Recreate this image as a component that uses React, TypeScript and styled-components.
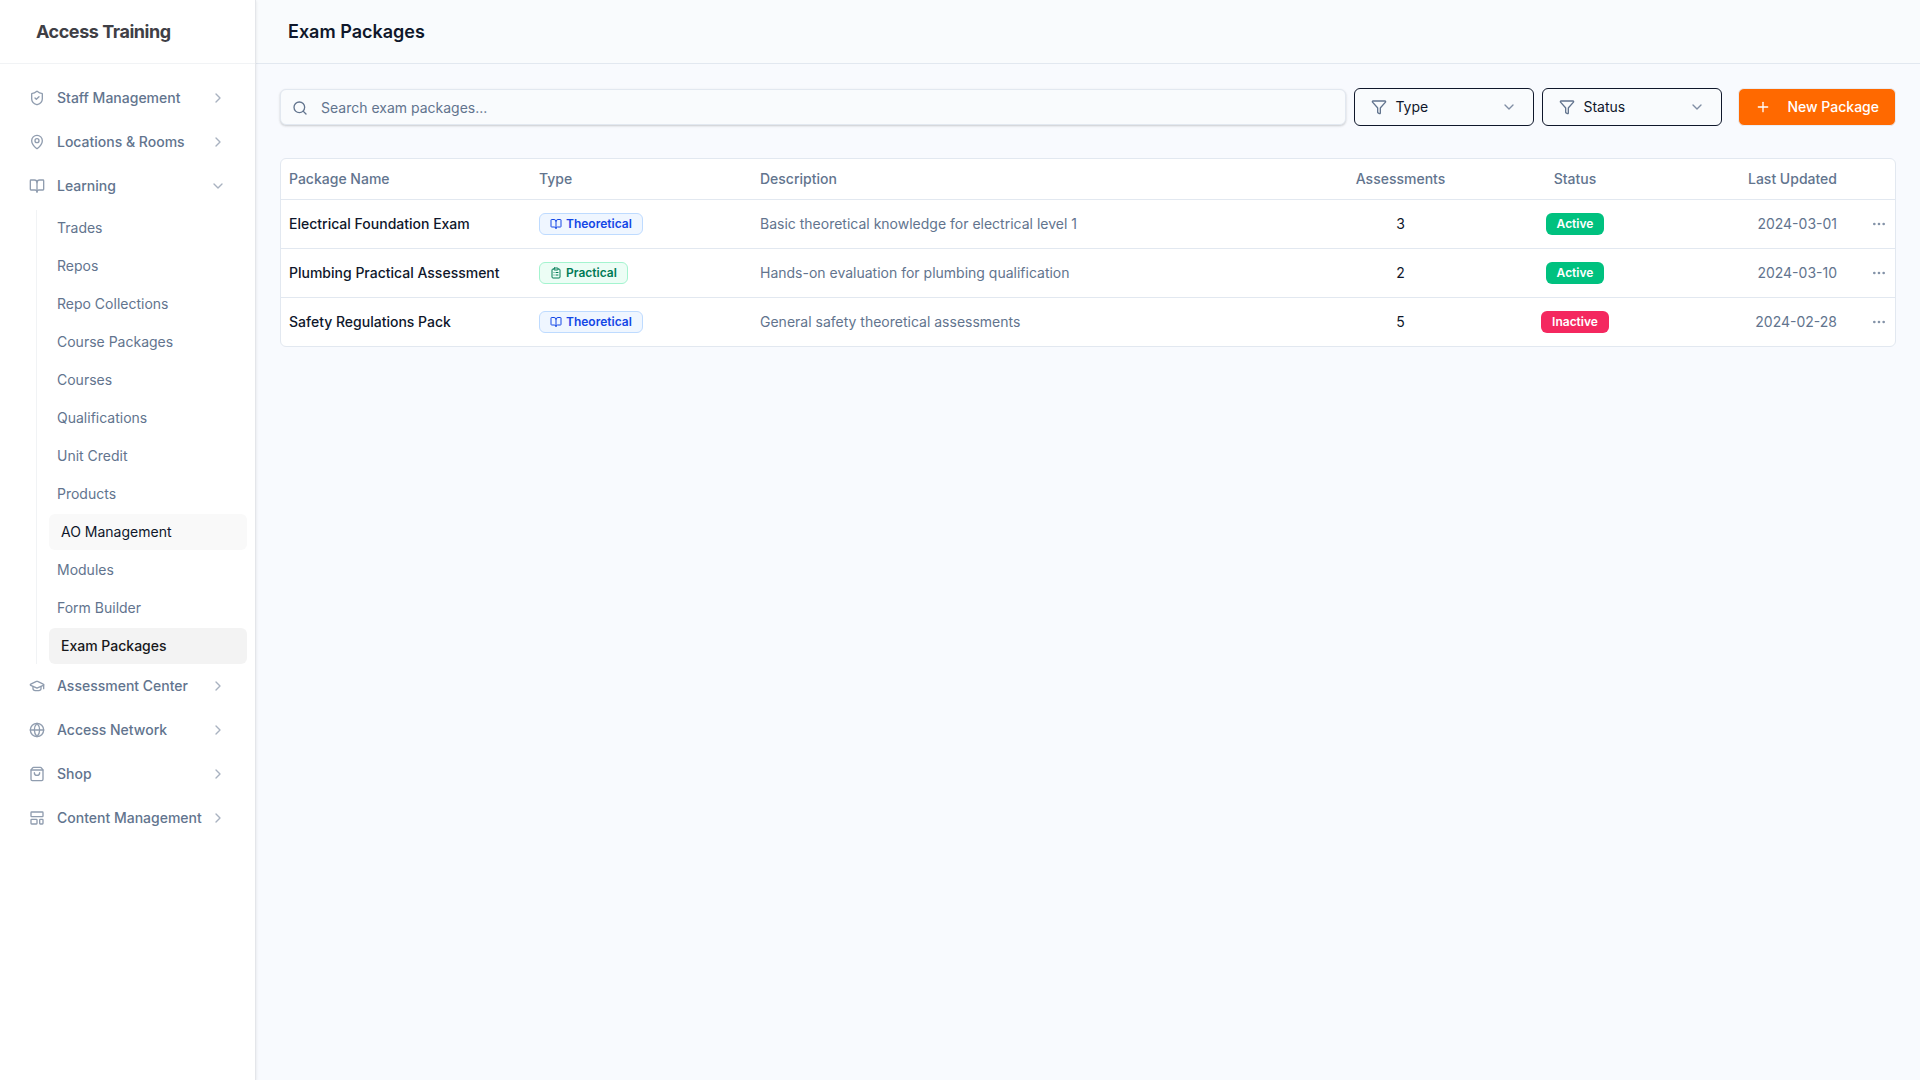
import React from "react";
import styled, { createGlobalStyle, css } from "styled-components";
import {
  BookOpen,
  ChevronDown,
  ChevronRight,
  ClipboardList,
  Ellipsis,
  Funnel,
  Globe,
  GraduationCap,
  LayoutTemplate,
  MapPin,
  Plus,
  Search,
  ShieldCheck,
  ShoppingBag,
} from "lucide-react";

const GlobalStyle = createGlobalStyle`
  *, *::before, *::after { box-sizing: border-box; }
  body {
    margin: 0;
    background: #f8fafe;
    color: #0f172b;
    font-family: Inter, "Liberation Sans", sans-serif;
    font-size: 14px;
    line-height: 20px;
  }
  button, input, select { font: inherit; color: inherit; }
`;

const Shell = styled.div`
  display: flex;
  min-height: 100vh;
`;

const Sidebar = styled.aside`
  position: relative;
  z-index: 1;
  flex: none;
  width: 256px;
  background: #fff;
  border-right: 1px solid #e4e6ea;
  box-shadow: 0 1px 3px rgba(0, 0, 0, 0.1);
`;

const Brand = styled.div`
  display: flex;
  align-items: center;
  height: 64px;
  padding: 0 36px;
  border-bottom: 1px solid #f1f3f5;
  color: #3f3f46;
  font-size: 18px;
  font-weight: 700;
  letter-spacing: -0.025em;
`;

const Nav = styled.nav`
  display: flex;
  flex-direction: column;
  gap: 4px;
  padding: 14px 8px;
`;

const NavGroup = styled.div`
  display: flex;
  flex-direction: column;
`;

const NavButton = styled.button`
  display: flex;
  align-items: center;
  gap: 12px;
  height: 40px;
  padding: 0 21px;
  border: 0;
  background: none;
  color: #62748e;
  font-weight: 500;
  text-align: left;
  white-space: nowrap;
  cursor: pointer;

  svg {
    flex: none;
    opacity: 0.7;
  }
  svg:last-child {
    opacity: 0.55;
  }
  span {
    flex: 1;
    min-width: 0;
  }
`;

const SubMenu = styled.div`
  display: flex;
  flex-direction: column;
  gap: 2px;
  margin: 4px 0 -2px 28px;
  padding-left: 12px;
  border-left: 1px solid #f1f3f5;
`;

const SubLink = styled.a<{ $tone?: "hover" | "active" }>`
  display: flex;
  align-items: center;
  height: 36px;
  padding: 0 8px;
  border-radius: 6px;
  color: #62748e;
  text-decoration: none;
  ${({ $tone }) =>
    $tone === "hover" &&
    css`
      padding: 0 12px;
      background: #f9f9f9;
      color: #0f172b;
    `}
  ${({ $tone }) =>
    $tone === "active" &&
    css`
      padding: 0 12px;
      background: #f3f3f3;
      color: #18181b;
      font-weight: 500;
    `}
`;

const Main = styled.main`
  flex: 1;
  min-width: 0;
`;

const Header = styled.header`
  display: flex;
  align-items: center;
  height: 64px;
  padding: 0 32px;
  border-bottom: 1px solid #e2e8f0;
  background: #f9fbfd;
`;

const Title = styled.h1`
  margin: 0;
  font-size: 18px;
  font-weight: 600;
`;

const Content = styled.div`
  display: flex;
  flex-direction: column;
  gap: 32px;
  padding: 24px;
`;

const Toolbar = styled.div`
  display: flex;
  align-items: center;
  gap: 8px;
`;

const SearchBox = styled.label`
  display: flex;
  flex: 1;
  align-items: center;
  gap: 13px;
  height: 36px;
  padding: 2px 11px 0;
  border: 1px solid #e2e8f0;
  border-radius: 6px;
  background: #f9fbfd;
  box-shadow: 0 1px 3px rgba(0, 0, 0, 0.1), 0 1px 2px rgba(0, 0, 0, 0.1);
  color: #62748e;

  svg {
    flex: none;
  }
  input {
    flex: 1;
    min-width: 0;
    padding: 0;
    border: 0;
    outline: 0;
    background: none;
  }
  input::placeholder {
    color: #62748e;
    opacity: 1;
  }
`;

const Filter = styled.label`
  display: flex;
  flex: none;
  align-items: center;
  gap: 8px;
  width: 180px;
  height: 38px;
  padding: 0 16px;
  border: 1px solid #0f172b;
  border-radius: 6px;
  background: #f9fbfd;

  svg {
    flex: none;
    color: #62748e;
  }
  svg:last-child {
    opacity: 0.8;
  }
  select {
    flex: 1;
    min-width: 0;
    padding: 0;
    border: 0;
    outline: 0;
    background: none;
    appearance: none;
  }
`;

const NewButton = styled.button`
  display: flex;
  flex: none;
  align-items: center;
  gap: 16px;
  height: 38px;
  margin-left: 8px;
  padding: 0 16px;
  border: 1px solid #e9edf3;
  border-radius: 6px;
  background: #ff6900;
  color: #fff;
  font-weight: 500;
  cursor: pointer;
`;

const TableCard = styled.div`
  overflow: hidden;
  border: 1px solid #e2e8f0;
  border-radius: 6px;
  background: #fff;
`;

const Table = styled.table`
  width: 100%;
  border-collapse: separate;
  border-spacing: 0;
  table-layout: fixed;

  tbody tr:last-child td {
    height: 48px;
    border-bottom: 0;
  }
`;

type Align = "left" | "center" | "right";

const Th = styled.th<{ $width?: number; $align?: Align }>`
  width: ${({ $width }) => ($width ? `${$width}px` : "auto")};
  height: 41px;
  padding: 0 8px;
  border-bottom: 1px solid #e2e8f0;
  color: #62748e;
  font-weight: 500;
  text-align: ${({ $align = "left" }) => $align};
`;

const Td = styled.td<{ $align?: Align; $muted?: boolean; $strong?: boolean }>`
  height: 49px;
  padding: 0 8px;
  border-bottom: 1px solid #e2e8f0;
  color: ${({ $muted }) => ($muted ? "#62748e" : "#0f172b")};
  font-weight: ${({ $strong }) => ($strong ? 500 : 400)};
  text-align: ${({ $align = "left" }) => $align};
  white-space: nowrap;
`;

const badgeTones = {
  blue: css`
    border-color: #bedbff;
    background: #eff6ff;
    color: #1447e6;
  `,
  green: css`
    border-color: #a4f4cf;
    background: #ecfdf5;
    color: #007a55;
  `,
  active: css`
    border-color: transparent;
    background: #00c17f;
    color: #fff;
  `,
  inactive: css`
    border-color: transparent;
    background: #f4285f;
    color: #fff;
  `,
};

const Badge = styled.span<{ $tone: keyof typeof badgeTones }>`
  display: inline-flex;
  align-items: center;
  gap: 4px;
  height: 22px;
  padding: 0 10px;
  border: 1px solid;
  border-radius: 6px;
  font-size: 12px;
  font-weight: 600;
  line-height: 16px;
  vertical-align: middle;
  ${({ $tone }) => badgeTones[$tone]}
`;

const MenuButton = styled.button`
  display: flex;
  margin-left: auto;
  padding: 0;
  border: 0;
  background: none;
  color: #8493a8;
  cursor: pointer;
`;

const learningLinks: { label: string; tone?: "hover" | "active" }[] = [
  { label: "Trades" },
  { label: "Repos" },
  { label: "Repo Collections" },
  { label: "Course Packages" },
  { label: "Courses" },
  { label: "Qualifications" },
  { label: "Unit Credit" },
  { label: "Products" },
  { label: "AO Management", tone: "hover" },
  { label: "Modules" },
  { label: "Form Builder" },
  { label: "Exam Packages", tone: "active" },
];

const navItems = [
  { label: "Staff Management", Icon: ShieldCheck },
  { label: "Locations & Rooms", Icon: MapPin },
  { label: "Learning", Icon: BookOpen, links: learningLinks },
  { label: "Assessment Center", Icon: GraduationCap },
  { label: "Access Network", Icon: Globe },
  { label: "Shop", Icon: ShoppingBag },
  { label: "Content Management", Icon: LayoutTemplate },
];

const packages = [
  {
    name: "Electrical Foundation Exam",
    theoretical: true,
    description: "Basic theoretical knowledge for electrical level 1",
    assessments: 3,
    active: true,
    updated: "2024-03-01",
  },
  {
    name: "Plumbing Practical Assessment",
    theoretical: false,
    description: "Hands-on evaluation for plumbing qualification",
    assessments: 2,
    active: true,
    updated: "2024-03-10",
  },
  {
    name: "Safety Regulations Pack",
    theoretical: true,
    description: "General safety theoretical assessments",
    assessments: 5,
    active: false,
    updated: "2024-02-28",
  },
];

function FilterSelect({ name, options }: { name: string; options: string[] }) {
  return (
    <Filter>
      <Funnel size={16} />
      <select aria-label={name} defaultValue="">
        <option value="">{name}</option>
        {options.map((option) => (
          <option key={option}>{option}</option>
        ))}
      </select>
      <ChevronDown size={16} />
    </Filter>
  );
}

export default function App() {
  return (
    <>
      <GlobalStyle />
      <Shell>
        <Sidebar>
          <Brand>Access Training</Brand>
          <Nav>
            {navItems.map(({ label, Icon, links }) => (
              <NavGroup key={label}>
                <NavButton type="button" aria-expanded={Boolean(links)}>
                  <Icon size={16} />
                  <span>{label}</span>
                  {links ? <ChevronDown size={16} /> : <ChevronRight size={16} />}
                </NavButton>
                {links && (
                  <SubMenu>
                    {links.map((link) => (
                      <SubLink key={link.label} href="#" $tone={link.tone}>
                        {link.label}
                      </SubLink>
                    ))}
                  </SubMenu>
                )}
              </NavGroup>
            ))}
          </Nav>
        </Sidebar>
        <Main>
          <Header>
            <Title>Exam Packages</Title>
          </Header>
          <Content>
            <Toolbar>
              <SearchBox>
                <Search size={16} />
                <input type="text" aria-label="Search exam packages" placeholder="Search exam packages..." />
              </SearchBox>
              <FilterSelect name="Type" options={["Theoretical", "Practical"]} />
              <FilterSelect name="Status" options={["Active", "Inactive"]} />
              <NewButton type="button">
                <Plus size={16} />
                New Package
              </NewButton>
            </Toolbar>
            <TableCard>
              <Table>
                <thead>
                  <tr>
                    <Th $width={250}>Package Name</Th>
                    <Th $width={221}>Type</Th>
                    <Th>Description</Th>
                    <Th $width={179} $align="center">Assessments</Th>
                    <Th $width={170} $align="center">Status</Th>
                    <Th $width={185} $align="right">Last Updated</Th>
                    <Th $width={50} aria-label="Actions" />
                  </tr>
                </thead>
                <tbody>
                  {packages.map((item) => (
                    <tr key={item.name}>
                      <Td $strong>{item.name}</Td>
                      <Td>
                        <Badge $tone={item.theoretical ? "blue" : "green"}>
                          {item.theoretical ? <BookOpen size={12} /> : <ClipboardList size={12} />}
                          {item.theoretical ? "Theoretical" : "Practical"}
                        </Badge>
                      </Td>
                      <Td $muted>{item.description}</Td>
                      <Td $align="center">{item.assessments}</Td>
                      <Td $align="center">
                        <Badge $tone={item.active ? "active" : "inactive"}>
                          {item.active ? "Active" : "Inactive"}
                        </Badge>
                      </Td>
                      <Td $muted $align="right">{item.updated}</Td>
                      <Td $align="right">
                        <MenuButton type="button" aria-label={`Actions for ${item.name}`}>
                          <Ellipsis size={16} />
                        </MenuButton>
                      </Td>
                    </tr>
                  ))}
                </tbody>
              </Table>
            </TableCard>
          </Content>
        </Main>
      </Shell>
    </>
  );
}
